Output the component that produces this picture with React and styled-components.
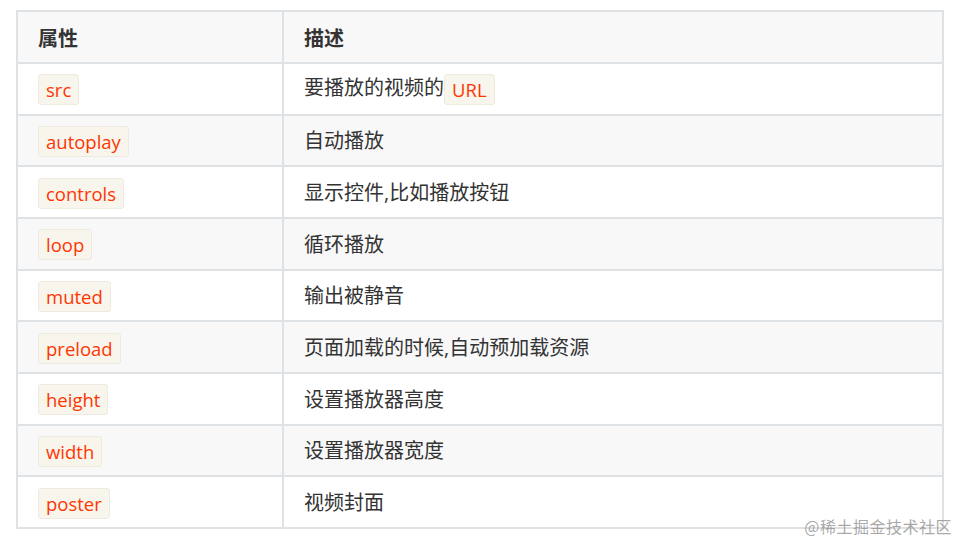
import React from "react";
import styled, { createGlobalStyle } from "styled-components";

const Global = createGlobalStyle`
  html, body { margin: 0; padding: 0; background: #fff; }
  body { font-family: "Open Sans", "Noto Sans CJK SC", sans-serif; }
`;

const Page = styled.div`
  position: relative;
  width: 959px;
  height: 544px;
  padding: 10px 15px 0 16px;
  box-sizing: border-box;
  overflow: hidden;
`;

const Table = styled.table`
  width: 928px;
  border-collapse: collapse;
  border: 2px solid #dfe2e5;
  color: #333;
  font-size: 20px;
  table-layout: fixed;
`;

const Th = styled.th`
  box-sizing: border-box;
  text-align: left;
  font-weight: 700;
  background: #f8f8f8;
  border: 2px solid #dfe2e5;
  padding: 3px 20px 0;
  height: 52px;
  line-height: 30px;
  vertical-align: middle;
  width: ${(p) => p.$w || "auto"};
`;

const Row = styled.tr`
  background: ${(p) => (p.$alt ? "#f8f8f8" : "#fff")};
`;

const Td = styled.td`
  box-sizing: border-box;
  border: 2px solid #dfe2e5;
  padding: 2px 20px 0;
  height: 51.67px;
  line-height: 28px;
  vertical-align: middle;
`;

const Code = styled.code`
  display: inline-block;
  font-family: "Open Sans", sans-serif;
  font-size: 18.5px;
  color: #ff3502;
  background: #f8f5ec;
  border: 1px solid #eeeae0;
  border-radius: 3px;
  padding: 4px 7px 3px;
  line-height: 22px;
  vertical-align: middle;
`;

const Watermark = styled.div`
  position: absolute;
  right: 7px;
  bottom: 6px;
  font-family: "Noto Sans CJK SC", sans-serif;
  font-size: 16px;
  color: rgba(140, 140, 140, 0.75);
  letter-spacing: 0.5px;
`;

const rows = [
  ["src", <>要播放的视频的<Code>URL</Code></>],
  ["autoplay", "自动播放"],
  ["controls", "显示控件,比如播放按钮"],
  ["loop", "循环播放"],
  ["muted", "输出被静音"],
  ["preload", "页面加载的时候,自动预加载资源"],
  ["height", "设置播放器高度"],
  ["width", "设置播放器宽度"],
  ["poster", "视频封面"],
];

export default function App() {
  return (
    <>
      <Global />
      <Page>
        <Table>
          <thead>
            <tr>
              <Th $w="266px">属性</Th>
              <Th>描述</Th>
            </tr>
          </thead>
          <tbody>
            {rows.map(([k, d], i) => (
              <Row key={k} $alt={i % 2 === 1}>
                <Td><Code>{k}</Code></Td>
                <Td>{d}</Td>
              </Row>
            ))}
          </tbody>
        </Table>
        <Watermark>@稀土掘金技术社区</Watermark>
      </Page>
    </>
  );
}
